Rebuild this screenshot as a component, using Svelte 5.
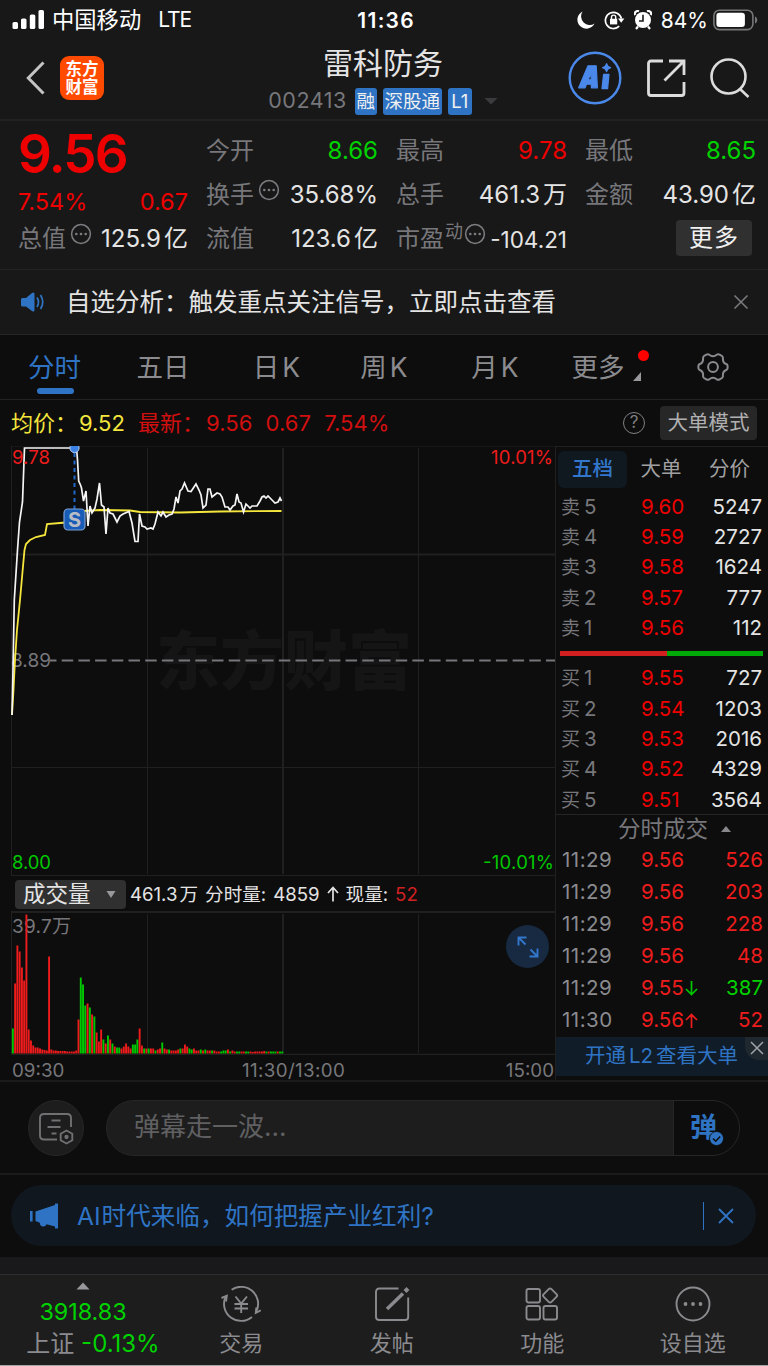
<script lang="ts">
	type Tone = 'up' | 'down' | '';

	interface Quote {
		label: string;
		value: string;
		unit?: string;
		tone?: Tone;
		info?: boolean;
		sup?: string;
	}

	const quotes: Quote[] = [
		{ label: '今开', value: '8.66', tone: 'down' },
		{ label: '最高', value: '9.78', tone: 'up' },
		{ label: '最低', value: '8.65', tone: 'down' },
		{ label: '换手', value: '35.68%', info: true },
		{ label: '总手', value: '461.3', unit: '万' },
		{ label: '金额', value: '43.90', unit: '亿' },
		{ label: '总值', value: '125.9', unit: '亿', info: true },
		{ label: '流值', value: '123.6', unit: '亿' },
		{ label: '市盈', value: '-104.21', info: true, sup: '动' }
	];

	const sells = [
		['卖5', '9.60', '5247'],
		['卖4', '9.59', '2727'],
		['卖3', '9.58', '1624'],
		['卖2', '9.57', '777'],
		['卖1', '9.56', '112']
	];

	const buys = [
		['买1', '9.55', '727'],
		['买2', '9.54', '1203'],
		['买3', '9.53', '2016'],
		['买4', '9.52', '4329'],
		['买5', '9.51', '3564']
	];

	const ticks = [
		{ time: '11:29', price: '9.56', arrow: '', volume: '526', tone: 'up' },
		{ time: '11:29', price: '9.56', arrow: '', volume: '203', tone: 'up' },
		{ time: '11:29', price: '9.56', arrow: '', volume: '228', tone: 'up' },
		{ time: '11:29', price: '9.56', arrow: '', volume: '48', tone: 'up' },
		{ time: '11:29', price: '9.55', arrow: '↓', volume: '387', tone: 'down' },
		{ time: '11:30', price: '9.56', arrow: '↑', volume: '52', tone: 'up' }
	];

	const priceLine =
		'12,715 13,670 14.3,600 17.5,550 19.5,522 22.5,502 24.5,448 76.5,448 77.5,460 78.7,481 80.5,485 81.5,488 83.5,501 86,491 88,526 90,506 92,513 95,508 97,499 99.5,483 101.5,505 104,507 106,534 108,508 110,513 113,514 117,522 120,516 123,514 129,511.5 132,523 135,541.5 138,541.5 139.5,514 142,526 145,527 147,529 151,528 153,529 155,524 158,512 161,516 163,512 166,517 169,515 172,514 174,509 176,497 178,503 180,491 182,489 184.5,483 188,491 191,491.5 196,484 199,490 201,495 203,508 206,505 208,489 210,489 212,497 217,493 220,494 222,497 225,507 228,507 230,510 233,506 235,505 237,494 239,502 241,503 243.5,512 246,504 250,508 252,506 257,506 260,501 262,497 264,496 266,498 268,496 272,500 275,503 278,502 280,498 281.5,501';
	const averageLine =
		'12,715 13.5,690 15,660 17,630 20,600 22.5,572 24.5,550 26,544 30,540 36,537 45,535 47,524 60,523 72,522 78,520 81,513 84,511 100,510 130,510.5 140,512 180,512.5 220,511.5 281.5,511';

	// one entry per minute: g falling, r rising
	const volumes =
		'g25 r70 r108 r102 r86 r73 r139 r24 r13 r8 r6 r6 r5 r4 r3.5 r3 r97 r4 r3 r3 r2.5 r2.5 r2.5 r2.5 r2 r2 r2 r2 r3 r34 g76 g69 g48 r50 g46 r39 g37 r21 r12 r24 g14 r10 g18 r14 g10 r7 g6 g6 r5 r7 r10 r7 r5 g9 g9 g14 r25 r8 g5 r5 g5 r5 r5 g3 r4 r5 g11 r5 r4 g4 r3 r3 r3 r4 g5 r5 r9 r7 g5 g4 r5 r3 r3 g4 r3 g4 r3 r3 g3 r3 r2 r2 g2 g3 g3 r4 g2 r3 r2 g2 g2 r2 r2 g2 g2 r2 r1.5 r2 r2 r2 r2 r2.5 g2 r2 g2 g2 g2 r2 g2 g2'
			.split(' ')
			.map((entry, i) => ({
				x: 11.9 + i * 2.264,
				height: Number(entry.slice(1)),
				color: entry[0] === 'g' ? '#00c800' : '#ee1c1c'
			}));
</script>

{#snippet dots()}
	<svg class="dots" width="22" height="22" viewBox="0 0 22 22">
		<circle cx="11" cy="11" r="9.4" fill="none" stroke="#7d7d81" stroke-width="1.5" />
		<circle cx="6.3" cy="11" r="1.3" fill="#7d7d81" />
		<circle cx="11" cy="11" r="1.3" fill="#7d7d81" />
		<circle cx="15.7" cy="11" r="1.3" fill="#7d7d81" />
	</svg>
{/snippet}

{#snippet quote(item: Quote)}
	<div class="quote">
		<span class="label">{item.label}</span>
		{#if item.sup}<span class="sup">{item.sup}</span>{/if}
		{#if item.info}{@render dots()}{/if}
		<span class="value {item.tone ?? ''}" class:small={item.sup}>{item.value}</span>
		{#if item.unit}<span class="unit">{item.unit}</span>{/if}
	</div>
{/snippet}

{#snippet order(row: string[])}
	<div class="order">
		<span class="side">{row[0][0]}<i>{row[0][1]}</i></span>
		<span class="up">{row[1]}</span>
		<span class="amount">{row[2]}</span>
	</div>
{/snippet}

<div class="screen">
	<div class="status">
		<div class="carrier">
			<svg width="33" height="20" viewBox="0 0 33 20" fill="#fff">
				<rect x="0.5" y="12" width="5.5" height="7" rx="1.6" />
				<rect x="9" y="8.5" width="5.5" height="10.5" rx="1.6" />
				<rect x="17.8" y="4.5" width="5.5" height="14.5" rx="1.6" />
				<rect x="26.5" y="0" width="5.5" height="19" rx="1.6" />
			</svg>
			<span class="carrier-name">中国移动</span>
			<span class="network">LTE</span>
		</div>
		<div class="clock">11:36</div>
		<div class="indicators">
			<svg width="18" height="18" viewBox="0 0 18 18">
				<path d="M5.6 0.5A9 9 0 1 0 17.6 12.4A8.6 8.6 0 0 1 5.6 0.5Z" fill="#fff" />
			</svg>
			<svg class="lock" width="21" height="20" viewBox="0 0 21 20" fill="none" stroke="#fff" stroke-width="1.7">
				<path d="M15.2 16.2A8.1 8.1 0 1 1 17.4 8.6" />
				<path d="M14 8.6h6.4l-3.2 4.2z" fill="#fff" stroke="none" />
				<rect x="6" y="8.8" width="7.2" height="5.6" fill="#fff" stroke="none" />
				<path d="M7.5 9V7.2a2.1 2.1 0 0 1 4.2 0V9" stroke-width="1.4" />
			</svg>
			<svg class="alarm" width="18" height="20" viewBox="0 0 18 20">
				<circle cx="9" cy="10" r="8" fill="#fff" />
				<path d="M1 5.2A3 3 0 0 1 5 1.3M17 5.2A3 3 0 0 0 13 1.3" stroke="#fff" stroke-width="2.2" fill="none" />
				<path d="M4 16.5l-2 2.5M14 16.5l2 2.5" stroke="#fff" stroke-width="2.2" />
				<path d="M9 4.8V11H5" stroke="#181818" stroke-width="1.6" fill="none" />
			</svg>
			<span class="percent">84%</span>
			<svg width="46" height="22" viewBox="0 0 46 22">
				<rect x="0.9" y="1.2" width="39" height="19.4" rx="5.5" fill="none" stroke="#77777a" stroke-width="1.6" />
				<rect x="3.4" y="3.8" width="28.5" height="14.2" rx="3" fill="#fff" />
				<path d="M42 7.5c3 1.2 3 5.8 0 7z" fill="#77777a" />
			</svg>
		</div>
	</div>

	<header>
		<div class="nav-left">
			<svg width="20" height="34" viewBox="0 0 20 34">
				<path d="M17.5 1.5L2.3 17L17.5 32.5" fill="none" stroke="#c4c4c4" stroke-width="3" />
			</svg>
			<div class="logo"><span>东方</span><span>财富</span></div>
		</div>
		<div class="title">
			<h1>雷科防务</h1>
			<div class="subtitle">
				<span class="code">002413</span>
				<span class="tag">融</span>
				<span class="tag wide">深股通</span>
				<span class="tag latin">L1</span>
				<svg width="14" height="8" viewBox="0 0 14 8"><path d="M0.5 1h13L7 7.5z" fill="#3b3b3d" /></svg>
			</div>
		</div>
		<div class="nav-right">
			<svg width="54" height="54" viewBox="0 0 54 54">
				<circle cx="27" cy="27" r="25.3" fill="none" stroke="#4a88ea" stroke-width="2.4" />
				<g fill="#4a88ea" stroke="#4a88ea" stroke-width="1.2" stroke-linejoin="round">
					<path fill-rule="evenodd" d="M20 14.8h8.2l1.2 22h-6l-.1-3.6h-4.9l-1.3 3.6h-6.4zM20 28.8h3.2l-.1-6.4z" />
					<path d="M35.6 23.3h5.4l-1.4 14.3h-5.6z" />
					<path d="M38.6 12.6q.7 3.3 4 4q-3.3.7-4 4q-.7-3.3-4-4q3.3-.7 4-4z" />
				</g>
			</svg>
			<svg width="40" height="40" viewBox="0 0 40 40" fill="none" stroke="#dcdcdc" stroke-width="2.8">
				<path d="M17 3H5q-2.5 0-2.5 2.5V35q0 2.5 2.5 2.5H35.5q2.5 0 2.5-2.5V24" />
				<path d="M23 3H38V17M38 3L18.5 22.5" />
			</svg>
			<svg width="40" height="40" viewBox="0 0 40 40" fill="none" stroke="#dcdcdc" stroke-width="2.6">
				<circle cx="18.5" cy="18.5" r="17" />
				<path d="M29.5 30.5L38.5 39" />
			</svg>
		</div>
	</header>

	<section class="quotes">
		<div class="last">
			<div class="last-price">9.56</div>
			<div class="change"><span>7.54%</span><span>0.67</span></div>
		</div>
		{#each quotes as item}
			{@render quote(item)}
		{/each}
		<div class="more-cell"><button>更多</button></div>
	</section>

	<section class="notice">
		<svg width="26" height="22" viewBox="0 0 26 22">
			<path d="M2.5 7H6L12 2q2.5-1.5 2.5 1V19q0 2.5-2.5 1L6 15.5H2.5Q1 15.5 1 14V8.5Q1 7 2.5 7Z" fill="#2f74c4" />
			<path d="M17 6.5q3 4.5 0 9.5M20.5 4q4.5 7 0 14" fill="none" stroke="#2f74c4" stroke-width="1.7" />
		</svg>
		<p>自选分析：触发重点关注信号，立即点击查看</p>
		<svg width="16" height="16" viewBox="0 0 16 16"><path d="M1.5 1.5l13 13M14.5 1.5l-13 13" stroke="#7c7c80" stroke-width="1.5" /></svg>
	</section>

	<nav class="tabs">
		<span class="active">分时</span>
		<span>五日</span>
		<span>日<i>K</i></span>
		<span>周<i>K</i></span>
		<span>月<i>K</i></span>
		<span class="more">更多
			<svg width="8" height="9" viewBox="0 0 8 9"><path d="M8 0v9H0z" fill="#98989c" /></svg>
			<b></b>
		</span>
		<span class="gear">
			<svg width="32" height="30" viewBox="0 0 32 30" fill="none" stroke="#8b8b8f" stroke-width="2">
				<path d="M12.3 2.8Q16 5.6 19.7 2.8Q21 1.7 22.6 2.6L25 4Q26.3 5 25.9 6.7Q25.8 11 29.2 12Q30.6 12.5 30.6 14V16Q30.6 17.5 29.2 18Q25.6 19.5 25.9 23.3Q26.3 25 25 26L22.6 27.4Q21 28.3 19.7 27.2Q16 24.4 12.3 27.2Q11 28.3 9.4 27.4L7 26Q5.7 25 6.1 23.3Q6.4 19.5 2.8 18Q1.4 17.5 1.4 16V14Q1.4 12.5 2.8 12Q6.2 11 6.1 6.7Q5.7 5 7 4L9.4 2.6Q11 1.7 12.3 2.8Z" />
				<circle cx="16" cy="15" r="4.9" />
			</svg>
		</span>
	</nav>

	<div class="summary">
		<span class="avg">均价：</span>
		<span class="avg-value">9.52</span>
		<span class="now">最新：</span>
		<span class="now-value">9.56</span>
		<span class="now-value">0.67</span>
		<span class="now-value">7.54%</span>
		<span class="help">?</span>
		<button>大单模式</button>
	</div>

	<main>
		<div class="charts">
			<svg class="price-chart" width="555" height="430" viewBox="0 446 555 430">
				<text x="156" y="684" textLength="256" font-size="64" font-weight="900" fill="#151515">东方财富</text>
				<g stroke="#202020">
					<path d="M11.5 446V876M147.5 448V874M418.5 448V874" />
					<path d="M283 448V874M11 554.5H555" stroke-width="2" />
					<path d="M11 446H555M11 767.5H555M11 875.5H555" />
				</g>
				<path d="M50 660.5H555" stroke="#77777b" stroke-width="2" stroke-dasharray="11.5 5.2" stroke-dashoffset="5" />
				<text x="11" y="667" textLength="40" font-size="19" fill="#77777b">8.89</text>
				<polyline points={averageLine} fill="none" stroke="#f4e63c" stroke-width="1.8" />
				<polyline points={priceLine} fill="none" stroke="#f5f5f5" stroke-width="1.7" />
				<path d="M74.5 453V509" stroke="#2268cc" stroke-width="2" stroke-dasharray="4 3.5" />
				<circle cx="74.5" cy="448" r="4.6" fill="#3c82e6" stroke="#b8cff0" stroke-width="1" />
				<rect x="64" y="509" width="21" height="21" rx="4" fill="#195cb8" stroke="#7d9fcf" stroke-width="1.2" />
				<text x="74.5" y="527" font-size="20" font-weight="700" text-anchor="middle" fill="#b9bcc4">S</text>
				<text x="12" y="464" textLength="38" font-size="18.5" fill="#ee1c1c">9.78</text>
				<text x="553" y="464" text-anchor="end" textLength="62" font-size="18.5" fill="#ee1c1c">10.01%</text>
				<text x="12" y="869" textLength="39" font-size="18.5" fill="#00c800">8.00</text>
				<text x="554" y="869" text-anchor="end" textLength="71" font-size="18.5" fill="#00c800">-10.01%</text>
			</svg>

			<div class="volume-head">
				<button>成交量
					<svg width="10" height="7" viewBox="0 0 10 7"><path d="M0.5 0h9L5 7z" fill="#98989c" /></svg>
				</button>
				<span>461.3<i>万</i></span>
				<span>分时量:</span>
				<span>4859</span>
				<svg width="12" height="16" viewBox="0 0 12 16"><path d="M6 15.5V2M1 7l5-5.5L11 7" fill="none" stroke="#e4e4e4" stroke-width="1.7" /></svg>
				<span>现量:</span>
				<span class="now-volume">52</span>
			</div>

			<div class="volume">
				<svg width="555" height="144" viewBox="0 911 555 144">
					<g stroke="#202020">
						<path d="M11.5 911V1054M147.5 914V1053M418.5 914V1053" />
						<path d="M283 914V1053M11 912H555" stroke-width="2" />
						<path d="M11 1054.5H555" stroke-width="1.5" />
					</g>
					<text x="12" y="932.5" textLength="59" font-size="19" fill="#77777b">39.7万</text>
					{#each volumes as bar}
						<rect x={bar.x} y={1053.5 - bar.height} width="1.9" height={bar.height} fill={bar.color} />
					{/each}
				</svg>
				<div class="expand">
					<svg width="24" height="24" viewBox="0 0 24 24" fill="none" stroke="#3277cc" stroke-width="1.9">
						<path d="M2.5 10.500V2.500H10.500M2.500 2.500L9.500 9.500M21.500 13.500V21.500H13.500M21.500 21.500L14.500 14.500" />
					</svg>
				</div>
			</div>

			<div class="times"><span>09:30</span><span class="noon">11:30/13:00</span><span>15:00</span></div>
		</div>

		<aside>
			<div class="book-tabs"><span class="active">五档</span><span>大单</span><span>分价</span></div>
			{#each sells as row}
				{@render order(row)}
			{/each}
			<div class="ratio"><span class="sell"></span><span class="buy"></span></div>
			{#each buys as row}
				{@render order(row)}
			{/each}
			<div class="ticks-title">分时成交
				<svg width="10" height="6" viewBox="0 0 10 6"><path d="M5 0l5 6H0z" fill="#88888c" /></svg>
			</div>
			{#each ticks as tick}
				<div class="tick">
					<span class="time">{tick.time}</span>
					<span class="price">{tick.price}
						{#if tick.arrow}
							<svg class:flip={tick.arrow === '↓'} width="13" height="15" viewBox="0 0 13 15"><path d="M6.5 15V1.5M1 7l5.5-5.5L12 7" fill="none" stroke={tick.tone === 'down' ? '#00c800' : '#ee1c1c'} stroke-width="1.7" /></svg>
						{/if}
					</span>
					<span class="amount {tick.tone}">{tick.volume}</span>
				</div>
			{/each}
			<div class="level2">
				开通<i>L2</i>查看大单
				<span><svg width="14" height="14" viewBox="0 0 14 14"><path d="M1 1l12 12M13 1L1 13" stroke="#a0a4a8" stroke-width="1.5" /></svg></span>
			</div>
		</aside>
	</main>

	<section class="barrage">
		<div class="barrage-settings">
			<svg width="36" height="34" viewBox="0 0 36 34" fill="none" stroke="#707072" stroke-width="1.9">
				<path d="M19 28.5H6q-4 0-4-4V7q0-4 4-4H29q4 0 4 4V16" />
				<path d="M13.5 9.5H22.5M9.5 16H22.5M13.5 22.5H18.5" />
				<path d="M28.5 19.5l5.8 3.2v6.6l-5.8 3.2l-5.8-3.2v-6.6z" />
				<circle cx="28.5" cy="26" r="1.2" fill="#707072" />
			</svg>
		</div>
		<div class="barrage-input">
			<span class="placeholder">弹幕走一波...</span>
			<span class="toggle">弹
				<svg width="15" height="15" viewBox="0 0 15 15"><circle cx="7.5" cy="7.5" r="7" fill="#2f74c4" stroke="#0d0d0d" stroke-width="0.8" /><path d="M4 7.5l2.7 2.7L11.2 5.5" fill="none" stroke="#0d0d0d" stroke-width="1.5" /></svg>
			</span>
		</div>
	</section>

	<section class="promo">
		<div class="promo-bar">
			<svg width="30" height="26" viewBox="0 0 30 26" fill="#2f74c4">
				<path d="M1 8h2.6v10.5H1z" />
				<path d="M6.5 8.5L26 2V0.5h3V25.500h-3V23.500L17.500 21.200q-1 2.600-3.500 2.300q-3-.3-3.200-3.800L6.500 18z" />
			</svg>
			<p><i>AI</i>时代来临，如何把握产业红利?</p>
			<span class="divider"></span>
			<svg width="16" height="16" viewBox="0 0 16 16"><path d="M1 1l14 14M15 1L1 15" stroke="#2f74c4" stroke-width="1.8" /></svg>
		</div>
	</section>

	<footer>
		<div class="index">
			<svg width="14" height="8" viewBox="0 0 14 8"><path d="M7 0.5l6.5 7h-13z" fill="#98989c" /></svg>
			<strong>3918.83</strong>
			<div><span>上证</span> -0.13%</div>
		</div>
		<div class="item">
			<svg width="40" height="36" viewBox="0 0 40 36" fill="none" stroke="#8b8b8f" stroke-width="1.9">
				<path d="M10.6 3.700A17 17 0 0 1 35.600 24.800M31 30.900A17 17 0 0 1 4.500 11" />
				<path d="M0.500 12L5.800 9.800L5 15.500M39.800 24.300L34.800 26.800L35.300 21.500" />
				<path d="M14.500 10.500L20.200 17.500L26 10.500M20.200 17V27M13.500 18H27M13.500 22.500H27" />
			</svg>
			<span>交易</span>
		</div>
		<div class="item">
			<svg width="36" height="36" viewBox="0 0 36 36" fill="none" stroke="#8b8b8f" stroke-width="1.9">
				<path d="M24.500 2.500H5.500Q2 2.500 2 6V31Q2 34 5.500 34H31Q34.200 34 34.200 31V11.500" />
				<path d="M13 23L29 7.500" stroke-width="3.400" />
				<path d="M31 5.500L34 2.500" stroke-width="4" />
			</svg>
			<span>发帖</span>
		</div>
		<div class="item">
			<svg width="34" height="36" viewBox="0 0 34 36" fill="none" stroke="#8b8b8f" stroke-width="1.9">
				<rect x="1.5" y="3" width="13.5" height="13.5" rx="2" />
				<rect x="1.5" y="20" width="13.5" height="13.5" rx="2" />
				<rect x="18.5" y="20" width="13.5" height="13.5" rx="2" />
				<rect x="19.6" y="4" width="11" height="11" rx="2" transform="rotate(45 25.1 9.5)" />
			</svg>
			<span>功能</span>
		</div>
		<div class="item">
			<svg width="36" height="36" viewBox="0 0 36 36" fill="none" stroke="#8b8b8f" stroke-width="1.9">
				<circle cx="18" cy="18" r="16.5" />
				<g fill="#8b8b8f" stroke="none"><circle cx="10.5" cy="18" r="1.9" /><circle cx="18" cy="18" r="1.9" /><circle cx="25.5" cy="18" r="1.9" /></g>
			</svg>
			<span>设自选</span>
		</div>
	</footer>
</div>

<style>
	:global(body) {
		background: #0d0d0d;
	}

	.screen {
		width: 768px;
		height: 1366px;
		overflow: hidden;
		box-sizing: border-box;
		border-bottom: 1px solid #a5a5a5;
		background: #0d0d0d;
		color: #e4e4e4;
		font-family: Inter, "Noto Sans CJK SC", sans-serif;
		font-size: 24px;
		line-height: 1;
		white-space: nowrap;
	}

	.screen * {
		box-sizing: border-box;
	}

	svg {
		display: block;
		flex: none;
	}

	i {
		font-style: normal;
	}

	button {
		border: none;
		padding: 0;
		font: inherit;
		white-space: nowrap;
	}

	h1,
	p {
		margin: 0;
		font-weight: 400;
	}

	.up {
		color: #ee0000;
	}

	.down {
		color: #00d200;
	}

	.status {
		height: 40px;
		padding: 0 9px 0 12px;
		background: #181818;
		color: #fff;
		display: grid;
		grid-template-columns: 1fr auto 1fr;
		align-items: center;
		font-size: 21px;
	}

	.carrier,
	.indicators {
		display: flex;
		align-items: center;
	}

	.carrier-name {
		margin: 0 17px 0 7px;
		font-size: 22.3px;
	}

	.network {
		letter-spacing: -1.1px;
	}

	.clock {
		font-weight: 600;
		letter-spacing: 1.3px;
		margin-right: -1.3px;
	}

	.indicators {
		justify-content: flex-end;
	}

	.lock {
		margin-left: 9px;
	}

	.alarm {
		margin: 0 9px;
	}

	.percent {
		margin-right: 5px;
	}

	header {
		height: 81px;
		border-bottom: 2px solid #222;
		padding: 0 18px 0 26px;
		background: #181818;
		display: grid;
		grid-template-columns: 172px 1fr 182px;
	}

	.nav-left,
	.nav-right {
		display: flex;
		align-items: center;
		height: 76px;
	}

	.logo {
		width: 44px;
		height: 44px;
		margin-left: 14px;
		border-radius: 9px;
		background: #ff4a00;
		color: #fff;
		font-size: 16.5px;
		font-weight: 700;
		line-height: 18px;
		display: flex;
		flex-direction: column;
		align-items: center;
		justify-content: center;
	}

	.title {
		display: flex;
		flex-direction: column;
		align-items: center;
	}

	h1 {
		height: 47px;
		line-height: 46px;
		font-size: 30px;
	}

	.subtitle {
		display: flex;
		align-items: center;
		height: 28px;
		color: #77777b;
		font-size: 21.5px;
	}

	.code {
		margin-right: 8px;
		letter-spacing: 0.5px;
	}

	.tag {
		height: 27px;
		width: 22px;
		margin-right: 6px;
		border-radius: 3px;
		background: #2f74c4;
		color: #f0f0f0;
		font-size: 18.5px;
		line-height: 27px;
		text-align: center;
	}

	.tag.wide {
		width: 59px;
	}

	.tag.latin {
		width: 24px;
		margin-right: 12px;
	}

	.nav-right {
		justify-content: space-between;
	}

	.quotes {
		height: 149px;
		padding: 7px 12px 0 18px;
		border-bottom: 1px solid #242424;
		background: #181818;
		display: grid;
		grid-template-columns: 170px 172px 171px 171px;
		grid-template-rows: repeat(3, 44px);
		column-gap: 18px;
	}

	.last {
		grid-row: span 2;
		color: #ee0000;
	}

	.last-price {
		height: 50px;
		line-height: 52px;
		font-size: 53px;
		font-weight: 600;
		letter-spacing: -1.8px;
	}

	.change {
		height: 46px;
		padding-top: 1px;
		display: flex;
		justify-content: space-between;
		align-items: center;
		font-size: 23.5px;
	}

	.quote {
		padding-top: 2px;
		display: flex;
		align-items: center;
	}

	.label,
	.sup {
		color: #77777b;
	}

	.sup {
		align-self: flex-start;
		margin: 5px 1px 0 1px;
		font-size: 18px;
	}

	.dots {
		margin: 0 0 10px 4px;
	}

	.sup + .dots {
		margin-left: 0;
	}

	.value {
		margin-left: auto;
	}

	.value.small {
		padding-top: 3px;
		font-size: 22.5px;
	}

	.unit {
		margin-left: 3px;
	}

	.more-cell {
		display: flex;
		align-items: center;
		justify-content: flex-end;
		padding-right: 4px;
	}

	.more-cell button {
		width: 76px;
		height: 36px;
		border-radius: 4px;
		background: #303030;
		color: #f0f0f0;
		letter-spacing: 1px;
	}

	.notice {
		height: 65px;
		padding: 0 19px 0 20px;
		border-bottom: 1px solid #242424;
		background: #181818;
		display: flex;
		align-items: center;
	}

	.notice p {
		flex: 1;
		margin-left: 20px;
		font-size: 24.5px;
	}

	.tabs {
		height: 65px;
		border-bottom: 1px solid #222;
		display: grid;
		grid-template-columns: 109px 108px 119px 96px 126px 80px 130px;
		color: #8b8b8f;
		font-size: 26.5px;
	}

	.tabs span {
		display: flex;
		align-items: center;
		justify-content: center;
		position: relative;
	}

	.tabs i {
		margin-left: 3px;
	}

	.tabs .active {
		color: #2f74c4;
	}

	.tabs .active::after {
		content: '';
		position: absolute;
		left: 37px;
		bottom: 5px;
		width: 37px;
		height: 6px;
		border-radius: 3px;
		background: #2f74c4;
	}

	.more svg {
		position: absolute;
		right: -3px;
		bottom: 18px;
	}

	.more b {
		position: absolute;
		right: -11px;
		top: 15px;
		width: 11px;
		height: 11px;
		border-radius: 50%;
		background: #ff0000;
	}

	.tabs .gear {
		padding-left: 20px;
	}

	.summary {
		height: 46px;
		padding: 0 11px 0 11px;
		display: flex;
		align-items: center;
		color: #d20f0f;
		font-size: 22px;
	}

	.avg,
	.avg-value {
		color: #f4e63c;
	}

	.avg,
	.now {
		width: 68px;
	}

	.avg-value {
		width: 59px;
	}

	.now-value {
		margin-right: 13px;
		letter-spacing: 0.1px;
	}

	.help {
		width: 22px;
		height: 22px;
		margin-left: auto;
		margin-right: 15px;
		border: 1.5px solid #808083;
		border-radius: 50%;
		color: #808083;
		font-size: 17px;
		line-height: 19px;
		text-align: center;
	}

	.summary button {
		width: 97px;
		height: 34px;
		border-radius: 4px;
		background: #272727;
		color: #b0b0b2;
		font-size: 20.5px;
	}

	main {
		height: 636px;
		border-bottom: 2px solid #1b1b1b;
		display: grid;
		grid-template-columns: 555px 213px;
	}

	.volume-head {
		height: 35px;
		padding: 1px 0 0 15px;
		display: flex;
		align-items: center;
		gap: 7px;
		font-size: 18.6px;
	}

	.volume-head i {
		margin-left: 2px;
	}

	.volume-head button {
		width: 111px;
		height: 29px;
		margin-right: -3px;
		padding: 0 10px 0 8px;
		border-radius: 4px;
		background: #303030;
		color: #e4e4e4;
		font-size: 22.5px;
		display: flex;
		align-items: center;
		justify-content: space-between;
	}

	.now-volume {
		color: #d22020;
	}

	.volume {
		position: relative;
	}

	.expand {
		position: absolute;
		left: 506px;
		top: 14px;
		width: 43px;
		height: 43px;
		border-radius: 50%;
		background: #172a42;
		display: flex;
		align-items: center;
		justify-content: center;
	}

	.times {
		height: 25px;
		padding: 6px 1px 0 12px;
		display: grid;
		grid-template-columns: 230px auto 1fr;
		align-items: start;
		color: #77777b;
		font-size: 18.8px;
		line-height: 19px;
	}

	.noon {
		letter-spacing: 0.35px;
	}

	.times span:last-child {
		text-align: right;
	}

	aside {
		border-left: 1px solid #202020;
		border-top: 1px solid #202020;
		font-size: 20.5px;
	}

	.book-tabs {
		height: 44px;
		padding: 0 2px;
		display: grid;
		grid-template-columns: 69px 68px 69px;
		align-items: center;
		color: #a0a0a2;
		text-align: center;
	}

	.book-tabs .active {
		height: 37px;
		border-radius: 6px;
		background: #101820;
		color: #3277cc;
		font-weight: 500;
		line-height: 36px;
	}

	.order {
		height: 30.3px;
		padding: 2px 6px 0 5px;
		display: grid;
		grid-template-columns: 80px 1fr auto;
		align-items: center;
	}

	.side {
		color: #77777b;
		font-size: 19px;
	}

	.side i {
		margin-left: 4px;
		font-size: 20.5px;
	}

	.ratio {
		height: 20px;
		padding: 2px 5px 0 4px;
		display: flex;
		align-items: center;
	}

	.ratio span {
		height: 5px;
	}

	.sell {
		width: 107px;
		background: #d22020;
	}

	.buy {
		flex: 1;
		background: #00a808;
	}

	.ticks-title {
		height: 29px;
		padding: 1px 0 0 25px;
		border-top: 1px solid #242424;
		display: flex;
		align-items: center;
		justify-content: center;
		gap: 13px;
		color: #77777b;
		font-size: 22.5px;
	}

	.tick {
		height: 32.1px;
		padding: 2px 5px 0 6px;
		display: grid;
		grid-template-columns: 79px 1fr auto;
		align-items: center;
	}

	.time {
		color: #8b8b8f;
		letter-spacing: 0.5px;
	}

	.price,
	.tick .up {
		color: #ee1c1c;
	}

	.price {
		display: flex;
		align-items: center;
		gap: 1px;
	}

	.flip {
		transform: rotate(180deg);
	}

	.level2 {
		position: relative;
		height: 39px;
		margin-top: 1px;
		padding-left: 29px;
		background: #101c28;
		color: #2f74c4;
		font-size: 20.5px;
		line-height: 37px;
	}

	.level2 i {
		margin: 0 3px;
	}

	.level2 span {
		position: absolute;
		right: 0;
		top: 0;
		width: 23px;
		height: 23px;
		border-bottom-left-radius: 14px;
		background: #20282f;
		display: flex;
		align-items: center;
		justify-content: center;
	}

	.barrage {
		height: 93px;
		padding: 0 28px;
		border-bottom: 2px solid #1b1b1b;
		display: flex;
		align-items: center;
		gap: 22px;
	}

	.barrage-settings {
		width: 56px;
		height: 56px;
		border: 1px solid #262626;
		border-radius: 50%;
		background: #1d1d1d;
		display: flex;
		align-items: center;
		justify-content: center;
	}

	.barrage-input {
		flex: 1;
		height: 56px;
		border: 1px solid #262626;
		border-radius: 28px;
		background: #1d1d1d;
		display: flex;
		overflow: hidden;
	}

	.placeholder {
		flex: 1;
		padding-left: 27px;
		color: #606062;
		font-size: 26px;
		line-height: 52px;
	}

	.toggle {
		position: relative;
		width: 66px;
		padding-left: 16px;
		background: #0d0d0d;
		border-left: 1px solid #262626;
		color: #2f74c4;
		font-size: 27px;
		font-weight: 700;
		line-height: 53px;
	}

	.toggle svg {
		position: absolute;
		left: 35px;
		top: 30px;
	}

	.promo {
		height: 82px;
		padding: 10px 12px 0 11px;
	}

	.promo-bar {
		height: 61px;
		padding: 0 22px 0 18px;
		border-radius: 31px;
		background: #10171f;
		color: #2f74c4;
		display: flex;
		align-items: center;
	}

	.promo p {
		flex: 1;
		margin-left: 18px;
		padding-top: 2px;
		font-size: 24.6px;
	}

	.promo i {
		margin-right: 1px;
	}

	.divider {
		width: 1.5px;
		height: 28px;
		margin-right: 14px;
		background: #2f74c4;
	}

	footer {
		height: 109px;
		border-top: 17px solid #19191b;
		background: #1d1d1d;
		display: grid;
		grid-template-columns: 166px repeat(4, 150.5px);
		color: #8b8b8f;
		font-size: 22px;
		box-shadow: inset 0 1px #2e2e2e;
	}

	.item {
		padding-top: 12px;
		display: flex;
		flex-direction: column;
		align-items: center;
		gap: 10px;
	}

	.index {
		padding: 8px 0 0 0;
		display: flex;
		flex-direction: column;
		align-items: center;
		color: #00d200;
		font-size: 23.3px;
	}

	.index strong {
		margin: 10px 0 9px;
		font-weight: 400;
	}

	.index div {
		margin-left: 20px;
		font-size: 24px;
	}

	.index span {
		color: #8b8b8f;
	}
</style>
